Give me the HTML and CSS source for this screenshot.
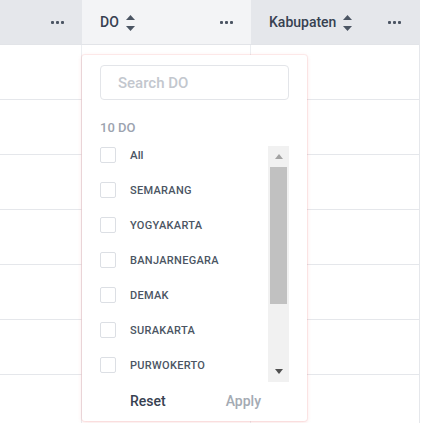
FILE: index.html
```html
<!DOCTYPE html>
<html lang="id">
<head>
<meta charset="utf-8">
<title>Tabel DO</title>
<link rel="stylesheet" href="styles.css">
</head>
<body>
<div class="table">
  <div class="row head">
    <div class="cell c1"><span class="spacer"></span><span class="dots"><i></i><i></i><i></i></span></div>
    <div class="cell c2 active"><span class="title">DO</span><span class="sort"><svg width="9" height="16" viewBox="0 0 9 16"><path d="M4.5 0 L9 5 H0 Z" fill="#4b5563"/><path d="M0 11 H9 L4.5 16 Z" fill="#4b5563"/></svg></span><span class="spacer"></span><span class="dots"><i></i><i></i><i></i></span></div>
    <div class="cell c3"><span class="title">Kabupaten</span><span class="sort"><svg width="9" height="16" viewBox="0 0 9 16"><path d="M4.5 0 L9 5 H0 Z" fill="#4b5563"/><path d="M0 11 H9 L4.5 16 Z" fill="#4b5563"/></svg></span><span class="spacer"></span><span class="dots"><i></i><i></i><i></i></span></div>
  </div>
  <div class="row body"><div class="cell c1"></div><div class="cell c2"></div><div class="cell c3"></div></div>
  <div class="row body"><div class="cell c1"></div><div class="cell c2"></div><div class="cell c3"></div></div>
  <div class="row body"><div class="cell c1"></div><div class="cell c2"></div><div class="cell c3"></div></div>
  <div class="row body"><div class="cell c1"></div><div class="cell c2"></div><div class="cell c3"></div></div>
  <div class="row body"><div class="cell c1"></div><div class="cell c2"></div><div class="cell c3"></div></div>
  <div class="row body"><div class="cell c1"></div><div class="cell c2"></div><div class="cell c3"></div></div>
  <div class="row body"><div class="cell c1"></div><div class="cell c2"></div><div class="cell c3"></div></div>

  <div class="dropdown">
    <div class="search"><span class="placeholder">Search DO</span></div>
    <div class="count">10 DO</div>
    <div class="listwrap">
      <div class="list">
        <label class="item"><span class="box"></span><span class="lbl all">All</span></label>
        <label class="item"><span class="box"></span><span class="lbl">SEMARANG</span></label>
        <label class="item"><span class="box"></span><span class="lbl">YOGYAKARTA</span></label>
        <label class="item"><span class="box"></span><span class="lbl">BANJARNEGARA</span></label>
        <label class="item"><span class="box"></span><span class="lbl">DEMAK</span></label>
        <label class="item"><span class="box"></span><span class="lbl">SURAKARTA</span></label>
        <label class="item"><span class="box"></span><span class="lbl">PURWOKERTO</span></label>
      </div>
      <div class="scrollbar">
        <div class="arrow up"><svg width="8" height="5" viewBox="0 0 8 5"><path d="M4 0 L8 5 H0 Z" fill="#a3a3a3"/></svg></div>
        <div class="track"><div class="thumb"></div></div>
        <div class="arrow down"><svg width="8" height="5" viewBox="0 0 8 5"><path d="M0 0 H8 L4 5 Z" fill="#505050"/></svg></div>
      </div>
    </div>
    <div class="footer">
      <span class="btn reset">Reset</span>
      <span class="btn apply">Apply</span>
    </div>
  </div>
</div>
</body>
</html>
```

FILE: styles.css
```css
* { box-sizing: border-box; }
html, body { margin: 0; padding: 0; background: #fff; }
body {
  font-family: Roboto, "Liberation Sans", sans-serif;
  width: 422px;
  height: 423px;
  overflow: hidden;
}
.table {
  position: relative;
  width: 420px;
  border-right: 1px solid #e5e7eb;
}
.row {
  display: grid;
  grid-template-columns: 82px 169px 168px;
}
.head {
  height: 45px;
  border-bottom: 1px solid #e2e4e8;
}
.head .cell {
  display: flex;
  align-items: center;
  padding: 0 18px;
  background: #e5e7eb;
}
.head .cell.active { background: #f3f4f6; }
.title {
  font-size: 14px;
  font-weight: 500;
  color: #374151;
}
.sort {
  display: flex;
  margin-left: 7px;
  margin-top: 1px;
}
.spacer { flex: 1; }
.dots {
  display: flex;
  gap: 2px;
  margin-top: 1px;
}
.dots i {
  width: 3px;
  height: 3px;
  background: #4b5563;
  border-radius: 1px;
}
.body {
  height: 55px;
  border-bottom: 1px solid #e5e7eb;
}
.body .cell { border-right: 1px solid #eceef1; }
.body .cell.c3 { border-right: none; }

.dropdown {
  position: absolute;
  left: 82px;
  top: 55px;
  width: 225px;
  height: 366px;
  background: #fff;
  border-radius: 3px;
  box-shadow: 0 0 0 1px rgba(239, 68, 68, 0.08), 0 1px 4px rgba(220, 80, 80, 0.18);
  padding: 10px 18px 0;
  display: flex;
  flex-direction: column;
}
.search {
  height: 35px;
  border: 1px solid #e3e5e9;
  border-radius: 4px;
  display: flex;
  align-items: center;
  padding-left: 17px;
}
.placeholder {
  font-size: 15px;
  font-weight: 500;
  color: #c3c7ce;
}
.count {
  margin-top: 20px;
  font-size: 13px;
  font-weight: 500;
  line-height: 16px;
  color: #9ca3af;
}
.listwrap {
  margin-top: 10px;
  height: 236px;
  display: flex;
}
.list {
  flex: 1;
  overflow: hidden;
}
.item {
  display: flex;
  align-items: flex-start;
  height: 35px;
  padding-top: 1px;
}
.box {
  width: 16px;
  height: 16px;
  border: 1px solid #dcdfe4;
  border-radius: 2px;
  background: #fff;
  flex: none;
}
.lbl {
  margin-left: 14px;
  font-size: 11px;
  font-weight: 500;
  line-height: 17px;
  color: #4b5563;
  letter-spacing: 0.3px;
}
.lbl.all { letter-spacing: 0; font-size: 11.5px; }
.scrollbar {
  width: 21px;
  background: #f1f1f1;
  display: flex;
  flex-direction: column;
  align-items: center;
}
.arrow {
  height: 21px;
  display: flex;
  align-items: center;
  justify-content: center;
  flex: none;
}
.track {
  flex: 1;
  width: 100%;
  padding: 0 2px;
}
.thumb {
  height: 137px;
  background: #c1c1c1;
}
.footer {
  flex: 1;
  display: flex;
  align-items: center;
  padding-left: 30px;
  padding-bottom: 2px;
}
.btn {
  font-size: 14px;
  font-weight: 500;
}
.reset { color: #374151; }
.apply { color: #a4aab3; margin-left: 60px; }
```
